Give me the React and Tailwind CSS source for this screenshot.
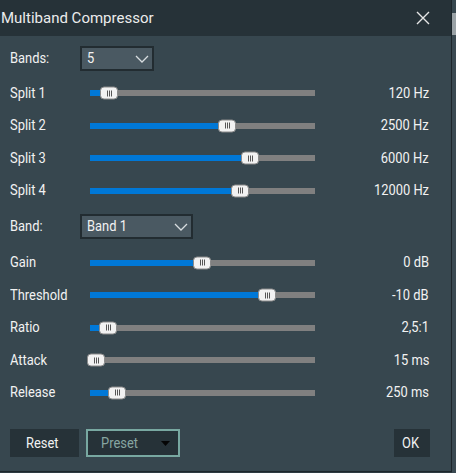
import React from "react";

const font = { fontFamily: "Roboto, 'Noto Sans', sans-serif" };

// Narrow UI text: Roboto squeezed horizontally
function T({ children, right = false, className = "" }) {
  return (
    <span
      className={`inline-block whitespace-nowrap scale-x-[0.86] ${right ? "origin-right" : "origin-left"} ${className}`}
    >
      {children}
    </span>
  );
}

function Chevron() {
  return (
    <svg width="14" height="8" viewBox="0 0 14 8" className="shrink-0">
      <path d="M1 1 L7 7 L13 1" fill="none" stroke="#d8dde0" strokeWidth="1.3" />
    </svg>
  );
}

function Select({ value, width }) {
  return (
    <div
      className={`${width} h-[25px] flex items-center justify-between pl-[5px] pr-[3px] bg-[#4a5962] border-2 border-[#222c31] text-[#f2f2f2]`}
    >
      <T className="text-[15px] leading-none">{value}</T>
      <Chevron />
    </div>
  );
}

function Thumb({ left }) {
  return (
    <div
      className="absolute top-1/2 -translate-y-1/2 w-[18px] h-[13px] rounded-[4px] bg-[#f2f2f2] border border-[#8a8a8a] flex items-center justify-center gap-[1px]"
      style={{ left }}
    >
      <span className="w-px h-[6px] bg-[#555]" />
      <span className="w-px h-[6px] bg-[#555]" />
      <span className="w-px h-[6px] bg-[#555]" />
    </div>
  );
}

function SliderRow({ label, value, thumb }) {
  const fill = Math.max(thumb + 9, 0);
  return (
    <div className="h-[32.5px] flex items-center text-[15px] leading-none text-[#f2f2f2]">
      <div className="w-[80px]">
        <T>{label}</T>
      </div>
      <div className="relative w-[225px] h-[6px] bg-[#808080]">
        <div className="absolute left-0 top-0 h-full bg-[#0078d7]" style={{ width: fill }} />
        <Thumb left={thumb} />
      </div>
      <div className="flex-1 text-right">
        <T right>{value}</T>
      </div>
    </div>
  );
}

export default function App() {
  const splits = [
    ["Split 1", "120 Hz", 10],
    ["Split 2", "2500 Hz", 128],
    ["Split 3", "6000 Hz", 151],
    ["Split 4", "12000 Hz", 141],
  ];
  const params = [
    ["Gain", "0 dB", 103],
    ["Threshold", "-10 dB", 168],
    ["Ratio", "2,5:1", 9],
    ["Attack", "15 ms", -3],
    ["Release", "250 ms", 18],
  ];
  return (
    <div className="w-[456px] h-[473px] flex bg-[#2e3b42]" style={font}>
      <div className="w-[452px] h-[472px] flex flex-col bg-[#37474f] border-r border-b border-[#1e272c]">
        {/* title bar */}
        <div className="h-[36px] shrink-0 flex items-center justify-between bg-[#263238] pl-[1px] pr-[21px]">
          <span className="text-[15px] text-[#ececec] whitespace-nowrap">Multiband Compressor</span>
          <svg width="14" height="14" viewBox="0 0 14 14">
            <path d="M1 1 L13 13 M13 1 L1 13" stroke="#e6e6e6" strokeWidth="1.4" />
          </svg>
        </div>

        <div className="flex flex-col pl-[10px] pr-[22px]">
          <div className="h-[41px] flex items-start pt-[10px]">
            <div className="w-[70px] h-[25px] flex items-center text-[15px] leading-none text-[#f2f2f2]">
              <T>Bands:</T>
            </div>
            <Select value="5" width="w-[74px]" />
          </div>

          {splits.map(([l, v, t]) => (
            <SliderRow key={l} label={l} value={v} thumb={t} />
          ))}

          <div className="h-[39.5px] flex items-center">
            <div className="w-[70px] text-[15px] leading-none text-[#f2f2f2]">
              <T>Band:</T>
            </div>
            <Select value="Band 1" width="w-[113px]" />
          </div>

          {params.map(([l, v, t]) => (
            <SliderRow key={l} label={l} value={v} thumb={t} />
          ))}

          <div className="mt-[20px] flex items-center text-[15px] leading-none">
            <button className="w-[69px] h-[28px] bg-[#263238] text-[#f2f2f2] flex items-center justify-center">
              <T className="origin-center">Reset</T>
            </button>
            <div className="ml-[7px] w-[94px] h-[28px] border-2 border-[#78a8a1] bg-[#263238] flex items-center justify-between pl-[13px] pr-[8px]">
              <T className="text-[#87a6a1]">Preset</T>
              <svg width="9" height="5" viewBox="0 0 9 5">
                <path d="M0 0 L9 0 L4.5 5 Z" fill="#050505" />
              </svg>
            </div>
            <div className="flex-1" />
            <button className="w-[36px] h-[28px] mr-[-1px] bg-[#263238] text-[#f2f2f2] flex items-center justify-center">
              <T className="origin-center">OK</T>
            </button>
          </div>
        </div>
      </div>
      {/* edge of the window behind */}
      <div className="flex-1 flex flex-col">
        <div className="h-[13px] bg-[#37474f]" />
        <div className="h-[22px] bg-[#9aa2a6]" />
        <div className="flex-1 bg-[#3b4a52]" />
      </div>
    </div>
  );
}
